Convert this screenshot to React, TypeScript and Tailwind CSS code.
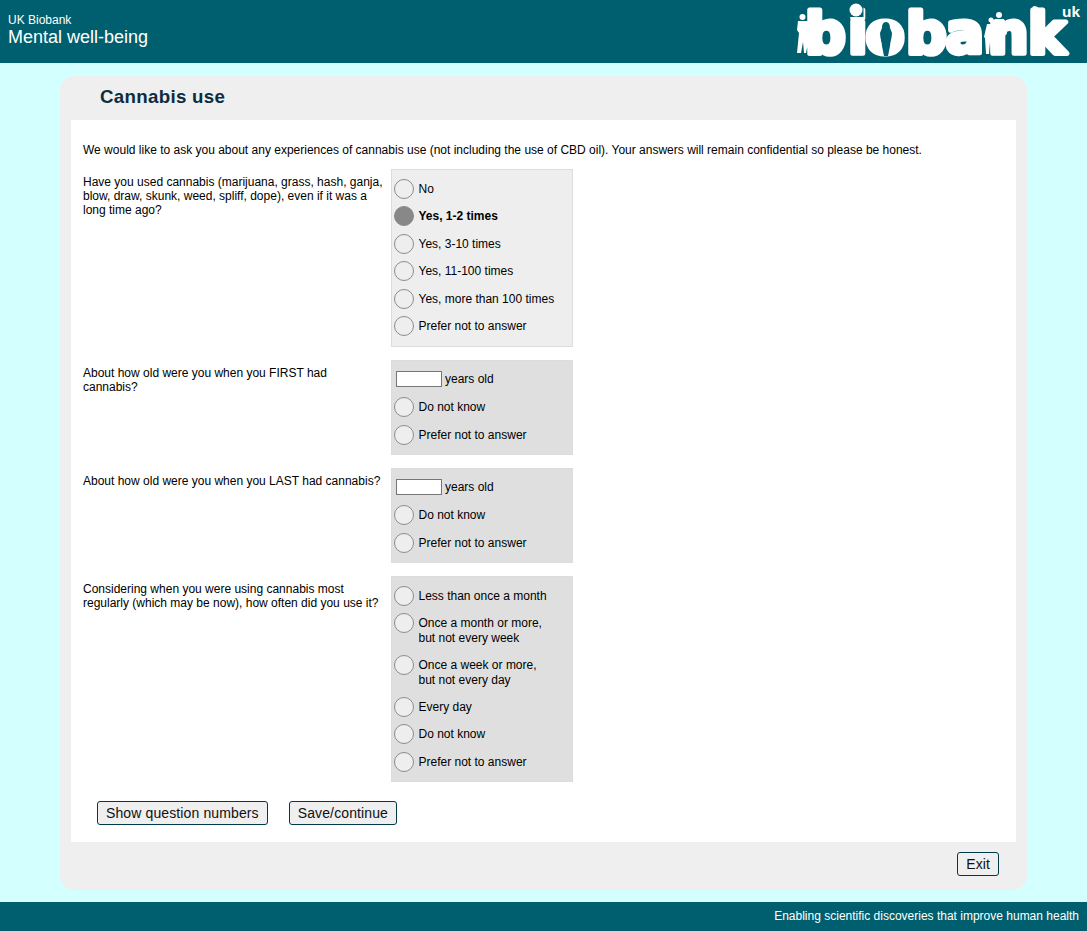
import { ReactNode } from 'react'

const FONT = "font-['Liberation_Sans',Arial,sans-serif]"

function Logo() {
  return (
    <svg width="290" height="63" viewBox="0 0 290 63" className="shrink-0 overflow-visible">
      <text
        x="8 51 68.5 109 148.5 191 231"
        y="52.5"
        fill="#fff"
        stroke="#fff"
        strokeWidth="5"
        strokeLinejoin="round"
        fontFamily="'DejaVu Sans', sans-serif"
        fontWeight="700"
        fontSize="57"
      >
        biobank
      </text>
      {/* the i gets a round dot of its own */}
      <rect x="51" y="0" width="15.5" height="17" fill="#005f6e" />
      <circle cx="59" cy="10" r="6.5" fill="#fff" />
      <rect x="53.5" y="17" width="12" height="8" rx="5" fill="#fff" />
      <text x="265" y="16.5" fill="#fff" fontFamily="'Liberation Sans', sans-serif" fontWeight="700" fontSize="15.4">
        uk
      </text>
      {/* silhouettes */}
      <g fill="#fff">
        <circle cx="5.5" cy="17" r="3" />
        <path d="M1 21h9l4 3v22l-4 2-1 5H7l-1-11-2 11H0l2-20-2-3z" />
        <circle cx="194" cy="20" r="2.5" />
        <path d="M190 24h8l2 13-2 1-1 16h-3l-1-12-1 12h-3l-1-16-1-1z" />
        <circle cx="202" cy="15" r="3" />
        <path d="M198 19h9l3 15-2 1-1 19h-3l-1-14-1 14h-3l-1-19-1-1z" />
        <path d="M237 6c4 0 6 3 6 8l1 8-2 32h-5l1-24-4-13c0-6 1-11 3-11z" />
      </g>
      {/* figure cut out of the o */}
      <path
        d="M89 22c3 0 4 3 4 6l2 5c0 5-2 9-2 13l-2 10h-4l-2-10c0-4-2-8-2-13l2-5c0-3 1-6 4-6z"
        fill="#005f6e"
      />
    </svg>
  )
}

function Radio({ label, name, checked }: { label: ReactNode; name: string; checked?: boolean }) {
  return (
    <label className="flex items-start">
      <input
        type="radio"
        name={name}
        defaultChecked={checked}
        className="peer appearance-none w-5 h-5 ml-[2px] mt-1 shrink-0 rounded-full border-[1.5px] border-[#8c8c8c] bg-[#eeeeee] checked:bg-[#888888] checked:border-[#888888]"
      />
      <span className="ml-[4.5px] mt-[7px] leading-[14.4px] peer-checked:font-bold">{label}</span>
    </label>
  )
}

function AgeQuestion({ name, children }: { name: string; children: ReactNode }) {
  return (
    <div className="flex">
      <div className="w-[308px] pr-2 leading-[14px]">{children}</div>
      <div className="w-[182px] h-[95px] border border-[#dcdcdc] bg-[#dfdfdf] pt-1">
        <div className="flex items-center h-[28px] pl-1">
          <input type="text" className="w-[46px] h-4 border border-[#767676] bg-white" />
          <span className="ml-[3px]">years old</span>
        </div>
        <div className="h-[28px]"><Radio name={name} label="Do not know" /></div>
        <div className="h-[28px]"><Radio name={name} label="Prefer not to answer" /></div>
      </div>
    </div>
  )
}

function Btn({ children }: { children: ReactNode }) {
  return (
    <button className="h-6 px-2 rounded-[3px] border border-[#003a4a] bg-[#efefef] text-[14px] text-[#111] tracking-[0.12px]">
      {children}
    </button>
  )
}

export default function App() {
  return (
    <div className={`${FONT} min-h-[931px] flex flex-col bg-[#d4ffff] text-[12px] text-black`}>
      <header className="h-[63px] bg-[#005f6e] text-white flex justify-between pl-2">
        <div className="pt-[13px]">
          <div className="text-[12px] leading-[14px]">UK Biobank</div>
          <div className="text-[18px] leading-[21px]">Mental well-being</div>
        </div>
        <Logo />
      </header>

      <main className="mx-[60px] mt-[13px] h-[814px] rounded-[14px] bg-[#efefef] flex flex-col">
        <h1 className="h-[44px] pl-10 pt-[9px] text-[18.72px] leading-[23px] font-bold text-[#0c2d3e] tracking-[0.3px]">
          Cannabis use
        </h1>
        <div className="mx-[11px] h-[722px] bg-white pl-3 pt-[23px] flex flex-col">
          <p className="leading-[14px] mb-[12px]">
            We would like to ask you about any experiences of cannabis use (not including the use of CBD oil). Your answers will remain confidential so please be honest.
          </p>

          <div className="flex mb-[13px]">
            <div className="w-[308px] pr-2 pt-[6px] leading-[14px]">
              Have you used cannabis (marijuana, grass, hash, ganja, blow, draw, skunk, weed, spliff, dope), even if it was a long time ago?
            </div>
            <div className="w-[182px] h-[178px] border border-[#dcdcdc] bg-[#eeeeee] pt-[5px] flex flex-col [&>*]:h-[27.4px]">
              <div><Radio name="q1" label="No" /></div>
              <div><Radio name="q1" label="Yes, 1-2 times" checked /></div>
              <div><Radio name="q1" label="Yes, 3-10 times" /></div>
              <div><Radio name="q1" label="Yes, 11-100 times" /></div>
              <div><Radio name="q1" label="Yes, more than 100 times" /></div>
              <div><Radio name="q1" label="Prefer not to answer" /></div>
            </div>
          </div>

          <div className="flex flex-col gap-[13px] [&>div>div:first-child]:pt-[6px]">
            <AgeQuestion name="q2">About how old were you when you FIRST had cannabis?</AgeQuestion>
            <AgeQuestion name="q3">About how old were you when you LAST had cannabis?</AgeQuestion>
            <div className="flex">
              <div className="w-[308px] pr-2 leading-[14px]">
                Considering when you were using cannabis most regularly (which may be now), how often did you use it?
              </div>
              <div className="w-[182px] h-[206px] border border-[#dcdcdc] bg-[#dfdfdf] pt-[5px]">
                <div className="h-[27.4px]"><Radio name="q4" label="Less than once a month" /></div>
                <div className="h-[42px]"><Radio name="q4" label={<>Once a month or more,<br />but not every week</>} /></div>
                <div className="h-[41.6px]"><Radio name="q4" label={<>Once a week or more,<br />but not every day</>} /></div>
                <div className="h-[27.4px]"><Radio name="q4" label="Every day" /></div>
                <div className="h-[27.4px]"><Radio name="q4" label="Do not know" /></div>
                <div className="h-[27.4px]"><Radio name="q4" label="Prefer not to answer" /></div>
              </div>
            </div>
          </div>

          <div className="flex gap-[21px] ml-[14px] mt-[19px]">
            <Btn>Show question numbers</Btn>
            <Btn>Save/continue</Btn>
          </div>
        </div>
        <div className="flex justify-end pr-[28px] pt-[10px]">
          <Btn>Exit</Btn>
        </div>
      </main>

      <footer className="mt-[12px] h-[29px] bg-[#005f6e] text-white text-right pr-2 pt-[7px] leading-[14px]">
        Enabling scientific discoveries that improve human health
      </footer>
    </div>
  )
}
